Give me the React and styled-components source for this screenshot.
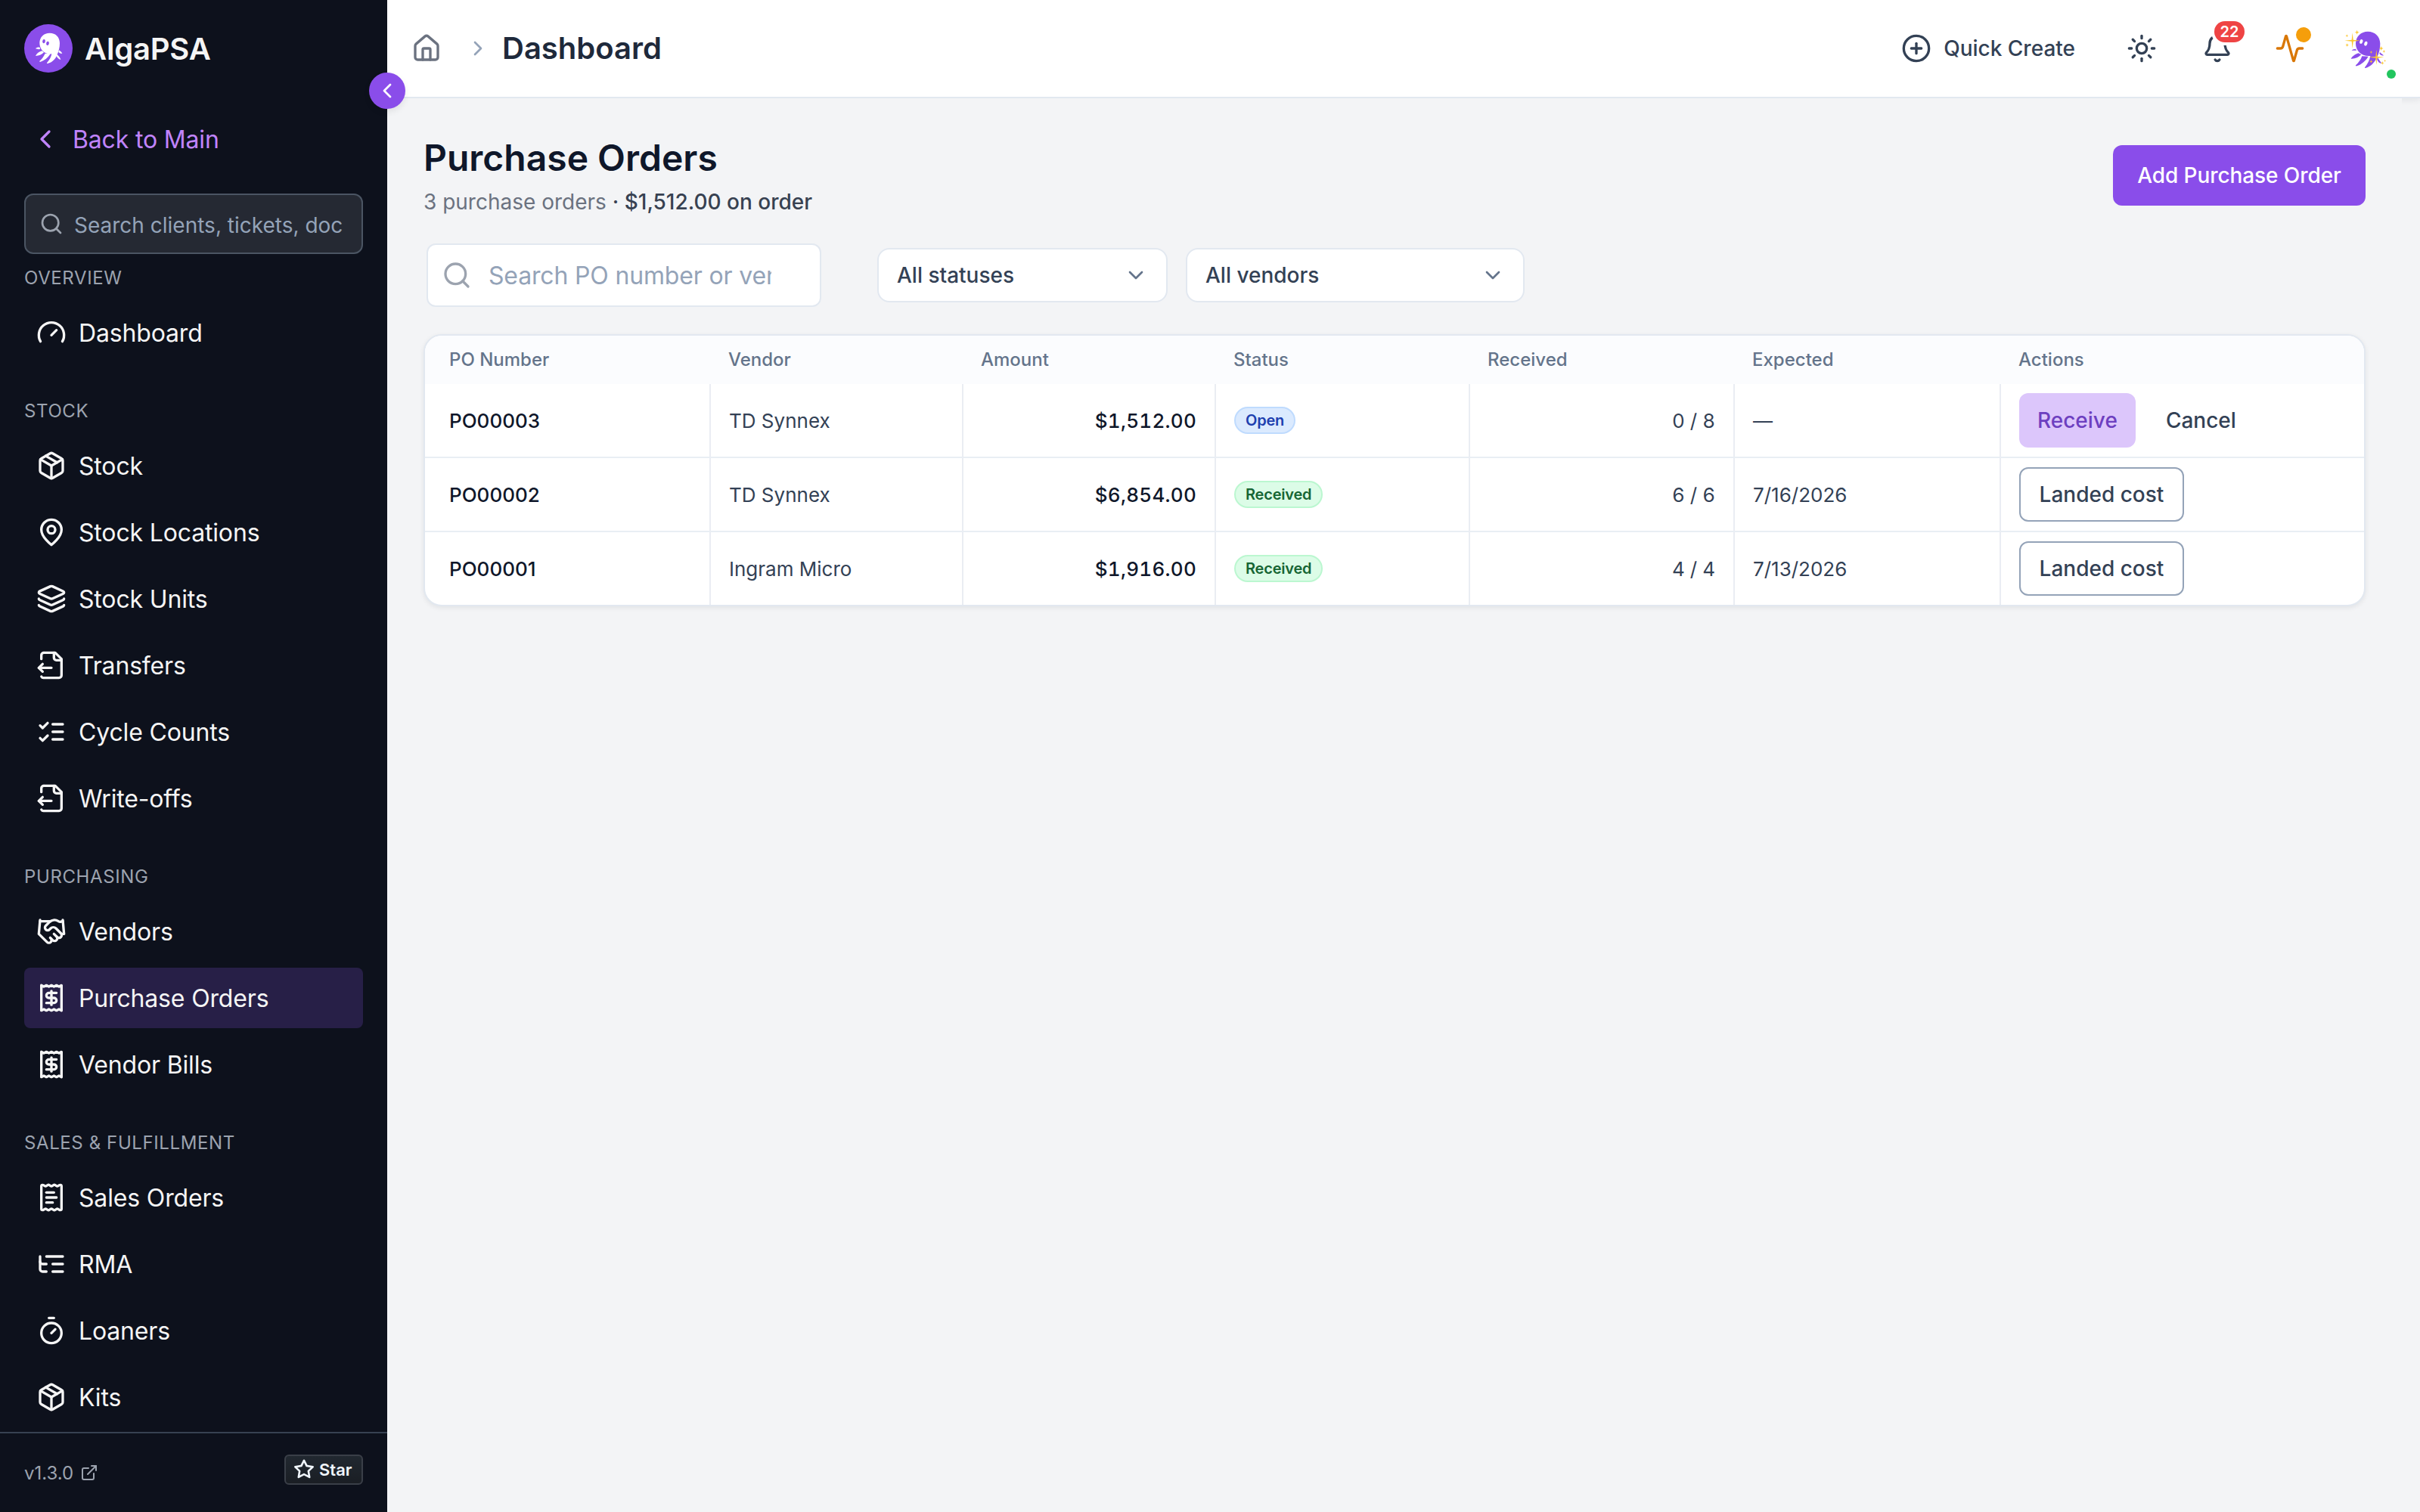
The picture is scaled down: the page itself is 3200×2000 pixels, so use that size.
// src/App.jsx
import React from 'react';
import styled, { createGlobalStyle, css } from 'styled-components';
import {
    Activity,
    Bell,
    ChevronDown,
    ChevronLeft,
    ChevronRight,
    CirclePlus,
    ExternalLink,
    Gauge,
    Handshake,
    House,
    Layers,
    Package,
    Receipt,
    ReceiptText,
    Search,
    Sun,
    Timer,
} from 'lucide-react';

const GlobalStyle = createGlobalStyle`
    * {
        box-sizing: border-box;
    }

    body {
        margin: 0;
        font-family: Inter, 'Liberation Sans', sans-serif;
        color: #334155;
        background: #f3f4f6;
    }

    button,
    input {
        font-family: inherit;
    }

    svg {
        display: block;
        flex-shrink: 0;
    }
`;

const Shell = styled.div`
    display: flex;
    width: 3200px;
    height: 2000px;
    overflow: hidden;
`;

/* Sidebar */

const Sidebar = styled.aside`
    position: relative;
    z-index: 2;
    display: flex;
    flex-direction: column;
    flex-shrink: 0;
    width: 512px;
    background: #0d111c;
    color: #f5f5f5;
`;

const Brand = styled.div`
    display: flex;
    align-items: center;
    gap: 16px;
    height: 128px;
    padding: 0 32px;
    font-size: 40px;
    font-weight: 600;
    letter-spacing: -0.005em;
`;

const CollapseButton = styled.button`
    position: absolute;
    top: 96px;
    right: -24px;
    display: flex;
    align-items: center;
    justify-content: center;
    width: 48px;
    height: 48px;
    padding: 0;
    border: none;
    border-radius: 50%;
    background: #8a4dea;
    color: #fff;
    box-shadow: 0 4px 8px rgba(0, 0, 0, 0.08);
`;

const BackLink = styled.a`
    display: flex;
    align-items: center;
    gap: 16px;
    height: 80px;
    margin: 16px 32px 32px;
    padding: 0 8px;
    border-radius: 8px;
    color: #c084fc;
    font-size: 32px;
    letter-spacing: -0.005em;
`;

const SidebarSearch = styled.label`
    display: flex;
    align-items: center;
    flex-shrink: 0;
    gap: 14px;
    height: 80px;
    margin: 0 32px 16px;
    padding: 0 24px 0 18px;
    border: 2px solid #4b5563;
    border-radius: 12px;
    background: #252933;
    color: #9ca3af;
`;

const SidebarInput = styled.input`
    flex: 1;
    min-width: 0;
    height: 44px;
    padding: 4px 0 0;
    border: none;
    background: none;
    font-size: 28px;

    &::placeholder {
        color: #94a3b8;
        opacity: 1;
    }
`;

const Nav = styled.nav`
    flex: 1;
    min-height: 0;
    padding: 0 32px;
    overflow: hidden;
`;

const NavSection = styled.section`
    margin-bottom: 48px;
`;

const NavHeading = styled.div`
    margin-bottom: 16px;
    color: #9ca3af;
    font-size: 24px;
    line-height: 32px;
    letter-spacing: 0.025em;
    text-transform: uppercase;
    white-space: nowrap;
`;

const NavList = styled.div`
    display: flex;
    flex-direction: column;
    gap: 8px;
`;

const NavItem = styled.a`
    display: flex;
    align-items: center;
    gap: 16px;
    height: 80px;
    padding: 0 16px;
    border-radius: 8px;
    font-size: 32px;
    letter-spacing: -0.005em;
    background: ${({ $active }) => ($active ? '#271f47' : 'transparent')};
`;

const SidebarFooter = styled.footer`
    display: flex;
    align-items: center;
    justify-content: space-between;
    flex-shrink: 0;
    height: 106px;
    padding: 0 32px;
    border-top: 2px solid #374151;
`;

const Version = styled.a`
    display: flex;
    align-items: center;
    gap: 9px;
    color: #9ca3af;
    font-size: 24px;
`;

const StarButton = styled.a`
    display: flex;
    align-items: center;
    gap: 6px;
    width: 104px;
    height: 40px;
    margin-bottom: 8px;
    padding: 0 10px;
    border: 2px solid #3a3f48;
    border-radius: 6px;
    background: linear-gradient(180deg, #212830, #1a1e24);
    color: #f0f6fc;
    font-size: 22px;
    font-weight: 600;
`;

/* Top bar */

const Page = styled.div`
    display: flex;
    flex: 1;
    flex-direction: column;
    min-width: 0;
`;

const TopBar = styled.header`
    display: flex;
    align-items: center;
    justify-content: space-between;
    flex-shrink: 0;
    height: 130px;
    padding: 0 36px 0 32px;
    border-bottom: 2px solid #e2e8f0;
    background: #fff;
    box-shadow: 0 2px 8px rgba(15, 23, 42, 0.08);
`;

const Breadcrumb = styled.div`
    display: flex;
    align-items: center;
    color: #6b7280;

    svg + svg {
        margin: 0 16px 0 32px;
        color: #94a3b8;
    }
`;

const Crumb = styled.span`
    padding-bottom: 2px;
    color: #1e293b;
    font-size: 40px;
    font-weight: 600;
`;

const TopActions = styled.div`
    display: flex;
    align-items: center;
`;

const QuickCreate = styled.button`
    display: flex;
    align-items: center;
    gap: 16px;
    height: 80px;
    padding: 0 48px 0 24px;
    border: none;
    background: none;
    color: #334155;
    font-size: 28px;
    font-weight: 500;
`;

const IconButton = styled.button`
    position: relative;
    display: flex;
    align-items: center;
    justify-content: center;
    width: 80px;
    height: 80px;
    margin-right: ${({ $gap }) => $gap}px;
    padding: 0;
    border: none;
    background: none;
    color: ${({ $color }) => $color || '#334155'};
`;

const CountBadge = styled.span`
    position: absolute;
    top: 4px;
    right: 4px;
    min-width: 40px;
    height: 28px;
    border-radius: 14px;
    background: #ef4444;
    color: #fff;
    font-size: 20px;
    font-weight: 600;
    line-height: 28px;
    text-align: center;
    box-shadow: 0 0 0 4px #fff;
`;

const AlertDot = styled.span`
    position: absolute;
    top: 12px;
    right: 12px;
    width: 20px;
    height: 20px;
    border-radius: 50%;
    background: #f59e0b;
`;

const Avatar = styled.div`
    position: relative;
    width: 64px;
    height: 64px;
`;

const OnlineDot = styled.span`
    position: absolute;
    right: -4px;
    bottom: -8px;
    width: 12px;
    height: 12px;
    border-radius: 50%;
    background: #22c55e;
`;

/* Content */

const Content = styled.main`
    position: relative;
    flex: 1;
    margin-right: 24px;
    padding: 46px 48px;
    background: #f3f4f6;
`;

const TitleRow = styled.div`
    display: flex;
    align-items: center;
    justify-content: space-between;
    height: 112px;
`;

const Title = styled.h1`
    margin: 0 0 6px;
    color: #0f172a;
    font-size: 48px;
    font-weight: 600;
    line-height: 64px;
`;

const Summary = styled.p`
    margin: 0;
    color: #6b7280;
    font-size: 28px;
    line-height: 40px;

    span {
        color: #374151;
        font-weight: 500;
    }
`;

const buttonVariants = {
    primary: css`
        width: 334px;
        height: 80px;
        background: #8a4dea;
        color: #fff;
        letter-spacing: -0.003em;
    `,
    soft: css`
        background: #dcc6fb;
        color: #6d3fc0;
    `,
    outline: css`
        min-width: 218px;
        border: 2px solid #94a3b8;
        background: #fff;
        color: #334155;
    `,
    ghost: css`
        background: none;
        color: #334155;
    `,
};

const Button = styled.button`
    height: 72px;
    padding: 0 24px;
    border: none;
    border-radius: 12px;
    font-size: 28px;
    font-weight: 500;
    white-space: nowrap;
    ${({ $variant }) => buttonVariants[$variant]}
`;

const Filters = styled.div`
    display: flex;
    align-items: center;
    gap: 24px;
    margin: 34px 0 36px 4px;
`;

const SearchBox = styled.label`
    display: flex;
    align-items: center;
    gap: 22px;
    width: 522px;
    height: 84px;
    margin-right: 50px;
    padding: 0 64px 0 18px;
    border: 2px solid #e2e8f0;
    border-radius: 12px;
    background: #fff;
    color: #9ca3af;
`;

const SearchInput = styled.input`
    flex: 1;
    min-width: 0;
    height: 48px;
    padding: 0;
    border: none;
    background: none;
    font-size: 32px;
    letter-spacing: -0.005em;

    &::placeholder {
        color: #94a3b8;
        opacity: 1;
    }
`;

const Select = styled.button`
    display: flex;
    align-items: center;
    justify-content: space-between;
    width: ${({ $width }) => $width}px;
    height: 72px;
    padding: 0 24px;
    border: 2px solid #e2e8f0;
    border-radius: 16px;
    background: #fff;
    color: #334155;
    font-size: 28px;
    font-weight: 500;

    svg {
        color: #64748b;
    }
`;

const Card = styled.div`
    border: 2px solid #e2e8f0;
    border-radius: 24px;
    background: #fff;
    box-shadow: 0 2px 6px rgba(15, 23, 42, 0.08);
    overflow: hidden;
`;

const Table = styled.table`
    width: 100%;
    border-collapse: separate;
    border-spacing: 0;
    table-layout: fixed;
`;

const Th = styled.th`
    height: 64px;
    padding: 0 24px 2px 23px;
    background: #fbfcfe;
    color: #64748b;
    font-size: 24px;
    font-weight: 500;
    text-align: left;

    &:first-child {
        padding-left: 32px;
    }
`;

const Td = styled.td`
    height: 98px;
    padding: 0 24px;
    border-right: 2px solid #eaedf3;
    border-bottom: 2px solid #e9eef4;
    color: ${({ $strong }) => ($strong ? '#0f172a' : '#334155')};
    font-size: 26px;
    font-weight: ${({ $strong }) => ($strong ? 500 : 400)};
    font-variant-numeric: ${({ $numeric }) => ($numeric ? 'tabular-nums' : 'normal')};
    letter-spacing: ${({ $strong, $numeric }) => ($strong && $numeric ? '0.01em' : 'normal')};
    text-align: ${({ $numeric }) => ($numeric ? 'right' : 'left')};

    &:first-child {
        padding-left: 32px;
    }

    &:last-child {
        border-right: none;
    }

    tr:last-child > & {
        height: 96px;
        border-bottom: none;
    }
`;

const statusColors = {
    Open: { text: '#1e40af', background: '#dbeafe', border: '#bfdbfe' },
    Received: { text: '#166534', background: '#dcfce7', border: '#bbf7d0' },
};

const StatusBadge = styled.span`
    display: flex;
    align-items: center;
    width: fit-content;
    height: 36px;
    padding: 0 13px;
    border: 2px solid ${({ $status }) => statusColors[$status].border};
    border-radius: 18px;
    background: ${({ $status }) => statusColors[$status].background};
    color: ${({ $status }) => statusColors[$status].text};
    font-size: 20px;
    font-weight: 600;
    letter-spacing: -0.01em;
`;

const RowActions = styled.div`
    display: flex;
    gap: 16px;
`;

/* Icons */

const strokeProps = {
    width: 40,
    height: 40,
    viewBox: '0 0 24 24',
    fill: 'none',
    stroke: 'currentColor',
    strokeWidth: 2,
    strokeLinecap: 'round',
    strokeLinejoin: 'round',
};

const ChecklistIcon = () => (
    <svg {...strokeProps}>
        <path d="m3 17 2 2 4-4" />
        <path d="m3 7 2 2 4-4" />
        <path d="M13 6h8" />
        <path d="M13 12h8" />
        <path d="M13 18h8" />
    </svg>
);

const TreeIcon = () => (
    <svg {...strokeProps}>
        <path d="M21 12h-8" />
        <path d="M21 6H8" />
        <path d="M21 18h-8" />
        <path d="M3 6v4c0 1.1.9 2 2 2h3" />
        <path d="M3 10v6c0 1.1.9 2 2 2h3" />
    </svg>
);

const PinIcon = () => (
    <svg {...strokeProps}>
        <path d="M20 10c0 6-8 12-8 12s-8-6-8-12a8 8 0 0 1 16 0Z" />
        <circle cx="12" cy="10" r="3" />
    </svg>
);

const FileOutIcon = () => (
    <svg {...strokeProps}>
        <path d="M14 2v4a2 2 0 0 0 2 2h4" />
        <path d="M4 7V4a2 2 0 0 1 2-2" />
        <path d="M4.063 20.999a2 2 0 0 0 2 1L18 22a2 2 0 0 0 2-2V7l-5-5H6" />
        <path d="m5 11-3 3" />
        <path d="m5 17-3-3h10" />
    </svg>
);

const StarIcon = () => (
    <svg width="28" height="28" viewBox="0 0 16 16" fill="currentColor">
        <path d="M8 .25a.75.75 0 0 1 .673.418l1.882 3.815 4.21.612a.75.75 0 0 1 .416 1.279l-3.046 2.97.719 4.192a.751.751 0 0 1-1.088.791L8 12.347l-3.766 1.98a.75.75 0 0 1-1.088-.79l.72-4.194L.818 6.374a.75.75 0 0 1 .416-1.28l4.21-.611L7.327.668A.75.75 0 0 1 8 .25Zm0 2.445L6.615 5.5a.75.75 0 0 1-.564.41l-3.097.45 2.24 2.184a.75.75 0 0 1 .216.664l-.528 3.084 2.769-1.456a.75.75 0 0 1 .698 0l2.77 1.456-.53-3.084a.75.75 0 0 1 .216-.664l2.24-2.183-3.096-.45a.75.75 0 0 1-.564-.41L8 2.694Z" />
    </svg>
);

const LogoIcon = () => (
    <svg width="64" height="64" viewBox="36 36 192 192">
        <circle cx="132" cy="132" r="96" fill="#8a4dea" />
        <g fill="#fff">
            <path d="M137 71c24 0 40 16 40 40 0 17-4 32-10 46-7 18-20 31-38 35-3 0-4-2-2-4 9-9 16-22 18-34-28 3-48-18-48-43 0-24 17-40 40-40Z" />
            <path d="M98 128c-7-1-14 1-17 5 5 2 13 3 18 2Z" />
            <path d="M107 142c-12 3-22 11-26 20 13 0 24-5 33-14Z" />
            <path d="M119 152c-6 13-13 22-22 30-1 3 1 4 4 3 16-5 29-16 39-31Z" />
            <path d="M174 139c5 4 11 8 13 13-6 1-12-2-15-6Z" />
            <path d="M167 156c5 5 12 13 14 21-9-2-14-8-17-15Z" />
        </g>
        <g fill="#8a4dea">
            <ellipse cx="114" cy="104" rx="5.5" ry="8" transform="rotate(12 114 104)" />
            <ellipse cx="129" cy="112" rx="5.5" ry="8" transform="rotate(12 129 112)" />
        </g>
    </svg>
);

// x, y, radius of each four-pointed sparkle
const sparkles = [
    [392, 101, 31],
    [410, 68, 9],
    [370, 82, 6],
    [371, 119, 7],
    [487, 167, 30],
    [506, 132, 9],
    [517, 144, 6],
    [466, 147, 6],
    [466, 184, 7],
    [511, 190, 7],
    [521, 181, 5],
];

const sparklePath = (x, y, r) => {
    const k = r > 20 ? r * 0.1 : r * 0.25;
    return `M${x} ${y - r}L${x + k} ${y - k}L${x + r} ${y}L${x + k} ${y + k}L${x} ${y + r}L${x - k} ${y + k}L${x - r} ${y}L${x - k} ${y - k}Z`;
};

const MascotIcon = () => (
    <svg width="64" height="64" viewBox="360 36 192 192">
        <g fill="#8a4dea">
            <path d="M453 65c28 0 49 20 49 48 0 21-4 38-14 57-10 20-24 34-44 40-3 0-4-2-2-4 10-11 18-27 21-44-35 3-58-21-58-49 0-28 21-48 48-48Z" />
            <path d="M405 134c-7 0-13 2-16 6h19Z" />
            <path d="M416 151c-13 4-25 13-30 22 16 1 30-5 41-16Z" />
            <path d="M430 163c-5 14-14 26-25 36-1 3 1 4 4 3 19-6 35-20 46-38Z" />
            <path d="M501 147c4 5 11 8 15 13-7 2-13-2-17-7Z" />
            <path d="M493 168c4 9 10 17 16 24-10 0-17-9-20-18Z" />
        </g>
        <g fill="#fff">
            <ellipse cx="427" cy="105" rx="6" ry="9" transform="rotate(18 427 105)" />
            <ellipse cx="445" cy="113" rx="6" ry="9" transform="rotate(18 445 113)" />
        </g>
        <g fill="#fbc62f">
            {sparkles.map(([x, y, r]) => (
                <path key={`${x}-${y}`} d={sparklePath(x, y, r)} />
            ))}
        </g>
    </svg>
);

const navSections = [
    { title: 'Overview', items: [{ label: 'Dashboard', icon: Gauge }] },
    {
        title: 'Stock',
        items: [
            { label: 'Stock', icon: Package },
            { label: 'Stock Locations', icon: PinIcon },
            { label: 'Stock Units', icon: Layers },
            { label: 'Transfers', icon: FileOutIcon },
            { label: 'Cycle Counts', icon: ChecklistIcon },
            { label: 'Write-offs', icon: FileOutIcon },
        ],
    },
    {
        title: 'Purchasing',
        items: [
            { label: 'Vendors', icon: Handshake },
            { label: 'Purchase Orders', icon: Receipt, active: true },
            { label: 'Vendor Bills', icon: Receipt },
        ],
    },
    {
        title: 'Sales & Fulfillment',
        items: [
            { label: 'Sales Orders', icon: ReceiptText },
            { label: 'RMA', icon: TreeIcon },
            { label: 'Loaners', icon: Timer },
            { label: 'Kits', icon: Package },
        ],
    },
];

const columns = [
    { label: 'PO Number', width: 378 },
    { label: 'Vendor', width: 334 },
    { label: 'Amount', width: 334 },
    { label: 'Status', width: 336 },
    { label: 'Received', width: 350 },
    { label: 'Expected', width: 352 },
    { label: 'Actions', width: 480 },
];

const orders = [
    { number: 'PO00003', vendor: 'TD Synnex', amount: '$1,512.00', status: 'Open', received: '0 / 8', expected: '—' },
    { number: 'PO00002', vendor: 'TD Synnex', amount: '$6,854.00', status: 'Received', received: '6 / 6', expected: '7/16/2026' },
    { number: 'PO00001', vendor: 'Ingram Micro', amount: '$1,916.00', status: 'Received', received: '4 / 4', expected: '7/13/2026' },
];

const SideNav = () => (
    <Sidebar>
        <Brand>
            <LogoIcon />
            AlgaPSA
        </Brand>
        <CollapseButton>
            <ChevronLeft size={32} />
        </CollapseButton>
        <BackLink>
            <ChevronLeft size={40} />
            Back to Main
        </BackLink>
        <SidebarSearch>
            <Search size={32} />
            <SidebarInput placeholder="Search clients, tickets, documents..." />
        </SidebarSearch>
        <Nav>
            {navSections.map((section) => (
                <NavSection key={section.title}>
                    <NavHeading>{section.title}</NavHeading>
                    <NavList>
                        {section.items.map(({ label, icon: Icon, active }) => (
                            <NavItem key={label} $active={active}>
                                <Icon size={40} />
                                {label}
                            </NavItem>
                        ))}
                    </NavList>
                </NavSection>
            ))}
        </Nav>
        <SidebarFooter>
            <Version>
                v1.3.0
                <ExternalLink size={24} />
            </Version>
            <StarButton>
                <StarIcon />
                Star
            </StarButton>
        </SidebarFooter>
    </Sidebar>
);

const Header = () => (
    <TopBar>
        <Breadcrumb>
            <House size={40} />
            <ChevronRight size={32} />
            <Crumb>Dashboard</Crumb>
        </Breadcrumb>
        <TopActions>
            <QuickCreate>
                <CirclePlus size={40} />
                Quick Create
            </QuickCreate>
            <IconButton $gap={20}>
                <Sun size={40} />
            </IconButton>
            <IconButton $gap={16}>
                <Bell size={40} />
                <CountBadge>22</CountBadge>
            </IconButton>
            <IconButton $gap={32} $color="#d97706">
                <Activity size={40} />
                <AlertDot />
            </IconButton>
            <Avatar>
                <MascotIcon />
                <OnlineDot />
            </Avatar>
        </TopActions>
    </TopBar>
);

const OrdersTable = () => (
    <Card>
        <Table>
            <colgroup>
                {columns.map((column) => (
                    <col key={column.label} width={column.width} />
                ))}
            </colgroup>
            <thead>
                <tr>
                    {columns.map((column) => (
                        <Th key={column.label}>{column.label}</Th>
                    ))}
                </tr>
            </thead>
            <tbody>
                {orders.map((order) => (
                    <tr key={order.number}>
                        <Td $strong>{order.number}</Td>
                        <Td>{order.vendor}</Td>
                        <Td $strong $numeric>{order.amount}</Td>
                        <Td>
                            <StatusBadge $status={order.status}>{order.status}</StatusBadge>
                        </Td>
                        <Td $numeric>{order.received}</Td>
                        <Td>{order.expected}</Td>
                        <Td>
                            {order.status === 'Open' ? (
                                <RowActions>
                                    <Button $variant="soft">Receive</Button>
                                    <Button $variant="ghost">Cancel</Button>
                                </RowActions>
                            ) : (
                                <RowActions>
                                    <Button $variant="outline">Landed cost</Button>
                                </RowActions>
                            )}
                        </Td>
                    </tr>
                ))}
            </tbody>
        </Table>
    </Card>
);

const App = () => (
    <Shell>
        <GlobalStyle />
        <SideNav />
        <Page>
            <Header />
            <Content>
                <TitleRow>
                    <div>
                        <Title>Purchase Orders</Title>
                        <Summary>
                            3 purchase orders <span>· $1,512.00 on order</span>
                        </Summary>
                    </div>
                    <Button $variant="primary">Add Purchase Order</Button>
                </TitleRow>
                <Filters>
                    <SearchBox>
                        <Search size={40} />
                        <SearchInput placeholder="Search PO number or vendor..." />
                    </SearchBox>
                    <Select $width={384}>
                        All statuses
                        <ChevronDown size={32} />
                    </Select>
                    <Select $width={448}>
                        All vendors
                        <ChevronDown size={32} />
                    </Select>
                </Filters>
                <OrdersTable />
            </Content>
        </Page>
    </Shell>
);

export default App;
